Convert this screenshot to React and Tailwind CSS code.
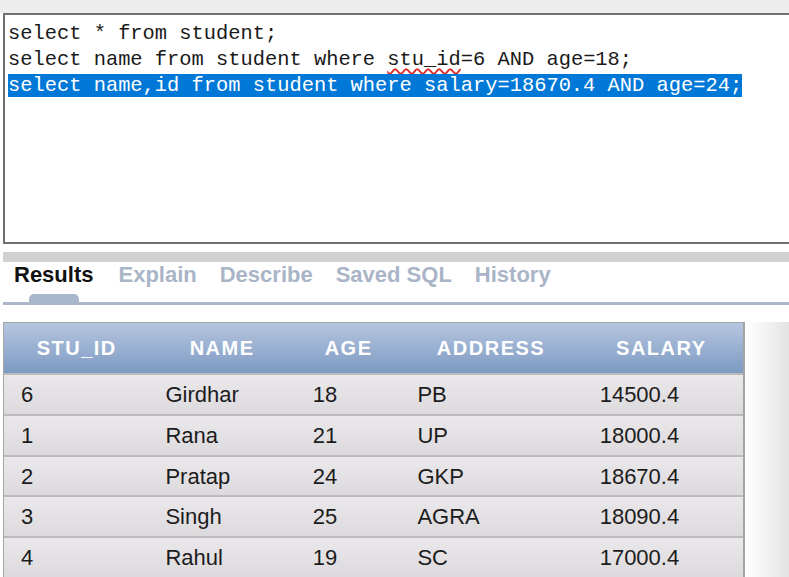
import React from "react";

const sans = { fontFamily: '"Liberation Sans", Arial, sans-serif' };
const mono = { fontFamily: '"Liberation Mono", "Courier New", monospace' };

const columns = [
  { key: "id", label: "STU_ID", w: "w-[146px]", pad: "pl-[17px]" },
  { key: "name", label: "NAME", w: "w-[146px]", pad: "pl-[16px]" },
  { key: "age", label: "AGE", w: "w-[108px]", pad: "pl-[18px]" },
  { key: "address", label: "ADDRESS", w: "w-[178px]", pad: "pl-[15px]" },
  { key: "salary", label: "SALARY", w: "w-[164px]", pad: "pl-[20px]" },
];

const rows = [
  { id: 6, name: "Girdhar", age: 18, address: "PB", salary: "14500.4", h: "h-[41px]" },
  { id: 1, name: "Rana", age: 21, address: "UP", salary: "18000.4", h: "h-[41px]" },
  { id: 2, name: "Pratap", age: 24, address: "GKP", salary: "18670.4", h: "h-[40px]" },
  { id: 3, name: "Singh", age: 25, address: "AGRA", salary: "18090.4", h: "h-[41px]" },
  { id: 4, name: "Rahul", age: 19, address: "SC", salary: "17000.4", h: "h-[41px]" },
];

const tabs = ["Results", "Explain", "Describe", "Saved SQL", "History"];

function Editor() {
  return (
    <div
      className="ml-[3px] h-[231px] border-l-2 border-t-2 border-b-2 border-[#6f6f6f] bg-white pt-[6px] pl-[3px] text-[20.4px] leading-[26px] text-[#1a1a1a] whitespace-pre"
      style={mono}
    >
      <div>select * from student;</div>
      <div>
        select name from student where{" "}
        <span className="underline decoration-wavy decoration-[#e02828] decoration-[1.5px] underline-offset-[3px]">
          stu_id
        </span>
        =6 AND age=18;
      </div>
      <div>
        <span className="bg-[#0078d7] text-white">
          select name,id from student where salary=18670.4 AND age=24;
        </span>
      </div>
    </div>
  );
}

function Tabs() {
  return (
    <div style={sans}>
      <div className="ml-[3px] h-[10px] bg-[#d3d0d2]" />
      <div className="ml-[3px] flex h-[40px] items-start gap-[23px] pl-[11px] pt-[1px] text-[22px] font-bold leading-[24px]">
        {tabs.map((t, i) => (
          <div
            key={t}
            className={`relative h-full ${i === 0 ? "mr-[2px] text-[#111111]" : "text-[#a9b5c7]"}`}
          >
            {t}
            {i === 0 && (
              <div className="absolute bottom-0 left-[15px] h-[8px] w-[50px] rounded-t-[5px] bg-[#a9b7cd]" />
            )}
          </div>
        ))}
      </div>
      <div className="ml-[3px] h-[3px] bg-[#abb6ca]" />
    </div>
  );
}

function ResultTable() {
  return (
    <div className="mt-[17px] flex flex-1" style={sans}>
      <div className="ml-[3px] w-[742px] border-l border-r-2 border-t border-[#a3a3a3]">
        <div className="flex h-[50px] bg-gradient-to-b from-[#b6c6e0] to-[#7d9ac2] text-[20px] font-bold tracking-[1.5px] text-white">
          {columns.map((c) => (
            <div key={c.key} className={`${c.w} flex items-center justify-center`}>
              {c.label}
            </div>
          ))}
        </div>
        {rows.map((r) => (
          <div
            key={r.id}
            className={`flex ${r.h} border-t-2 border-[#bcbabc] bg-gradient-to-b from-[#ebe8eb] to-[#dddadd] text-[22px] text-[#1c1c1c]`}
          >
            {columns.map((c) => (
              <div key={c.key} className={`${c.w} ${c.pad} flex items-center`}>
                {r[c.key]}
              </div>
            ))}
          </div>
        ))}
      </div>
      <div className="flex-1 bg-gradient-to-r from-white via-[#f2f2f2] to-[#e2e2e2]" />
    </div>
  );
}

export default function App() {
  return (
    <div className="flex h-[577px] w-[789px] flex-col overflow-hidden bg-white">
      <div className="h-[13px] bg-[#ededed]" />
      <Editor />
      <div className="h-[8px]" />
      <Tabs />
      <ResultTable />
    </div>
  );
}
